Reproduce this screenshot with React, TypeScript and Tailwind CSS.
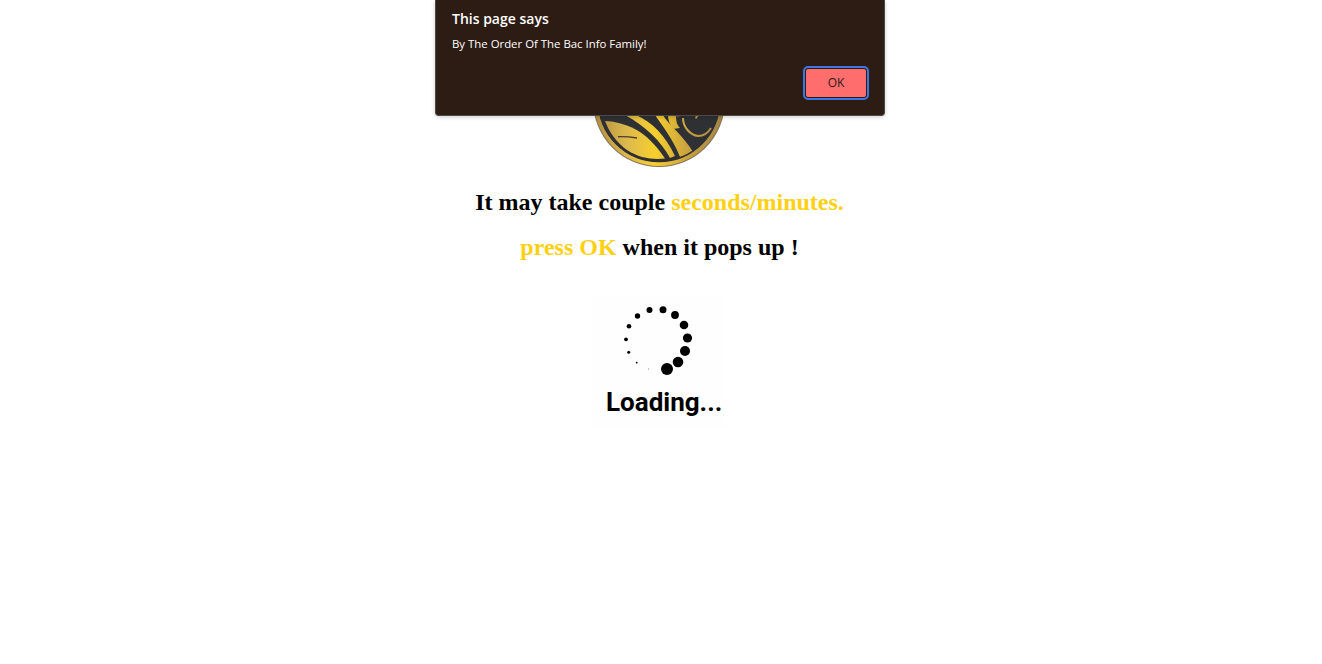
const loaderDots = [
  [74, 73, 6],
  [85, 66, 5.3],
  [92, 55, 5],
  [94.5, 42, 4.6],
  [91, 29, 4.3],
  [82, 19, 3.9],
  [70, 13.7, 3.5],
  [56.5, 14, 3],
  [44.5, 20, 2.7],
  [36, 30.3, 2.3],
  [33, 43.3, 1.9],
  [35.7, 56.3, 1.5],
  [43.7, 66.7, 0.9],
  [55.3, 73, 0.4],
];

function Emblem() {
  return (
    <svg width="132" height="132" viewBox="0 0 132 132" className="block">
      <defs>
        <linearGradient id="gold" gradientUnits="userSpaceOnUse" x1="0" x2="132" y1="0" y2="0">
          <stop offset="0" stopColor="#b08a3c" />
          <stop offset="0.25" stopColor="#dcb84e" />
          <stop offset="0.47" stopColor="#f6cf2e" />
          <stop offset="0.72" stopColor="#c9a13f" />
          <stop offset="1" stopColor="#a08244" />
        </linearGradient>
      </defs>
      <circle cx="66" cy="66" r="66" fill="#85765a" />
      <circle cx="66" cy="66" r="65" fill="url(#gold)" />
      <circle cx="66" cy="66" r="61" fill="#2f3033" />
      {/* wing feathers, only the lower part shows below the dialog */}
      <path
        d="M12 86 C22 86 36 90 47 97 C56 103 66 114 72 123.5 C60 125 46 123 34 115 C24 108 16 97 12 86 Z"
        fill="url(#gold)"
      />
      <path d="M25 101.7 C32 101.5 38 102 44 103" stroke="#4a3d2c" strokeWidth="1.4" fill="none" />
      <path d="M32 80 L43 80 C59 87 72 100 82 121 L77 123 C68 106 52 91 32 80 Z" fill="url(#gold)" />
      <path d="M62 80 L70 80 C74 88 90 100 100 117 L87 122 C80 104 70 92 62 80 Z" fill="url(#gold)" />
      <path d="M75 80 L83 80 C83 86 84 90 87 93 L80 94 C77 90 75 85 75 80 Z" fill="url(#gold)" />
      <path
        d="M90 83 C90 92 97 100 105 101 C111 101 115 98 118 93"
        stroke="url(#gold)"
        strokeWidth="2"
        fill="none"
      />
      <path d="M102 82 L106 80 L103 84 Z" fill="#d8b040" />
      <path d="M84 82 L88 80" stroke="#a8552c" strokeWidth="1" />
      <circle cx="66" cy="66" r="60.5" fill="none" stroke="#2f3033" strokeWidth="1.4" />
    </svg>
  );
}

function Loader() {
  return (
    <div className="w-[132px] h-[132px] bg-[#fdfefd] flex flex-col">
      <svg width="132" height="84" viewBox="0 0 132 84" className="block shrink-0">
        {loaderDots.map(([cx, cy, r], i) => (
          <circle key={i} cx={cx} cy={cy} r={r} fill="#000" />
        ))}
      </svg>
      <div className="pl-[13px] font-['Roboto',sans-serif] font-bold text-[26px] leading-[44px] text-black whitespace-nowrap">
        Loading...
      </div>
    </div>
  );
}

export default function App() {
  return (
    <div className="relative h-[664px] w-full overflow-hidden bg-white">
      <div className="flex flex-col items-center pt-[35px] pr-[4px]">
        <Emblem />
        <div className="mt-[13px] ml-[1px] text-center font-['Liberation_Serif',serif] font-bold text-[24px] leading-[45px] text-black">
          <p>
            It may take couple <span className="text-[#ffd013]">seconds/minutes.</span>
          </p>
          <p>
            <span className="text-[#ffd013]">press OK</span> when it pops up !
          </p>
        </div>
        <div className="mt-[26px]">
          <Loader />
        </div>
      </div>

      <div className="absolute top-0 left-[435px] w-[450px] h-[116px] bg-[#2d1c14] rounded-b-[4px] border border-t-0 border-[#4a4a4a] shadow-[0_1px_4px_rgba(0,0,0,0.2)] font-['Open_Sans',sans-serif] text-white flex flex-col px-[16px]">
        <div className="mt-[9px] text-[14px] leading-[20px] font-semibold">This page says</div>
        <div className="mt-[7px] text-[11.4px] leading-[16px]">By The Order Of The Bac Info Family!</div>
        <div className="flex justify-end mt-[16px] pr-[1px]">
          <button className="w-[62px] h-[30px] rounded-[3px] border border-[#2d1c14] outline-[2.5px] outline-[#3b78e7] bg-[#ff6d6d] text-[#2d1c14] text-[12px]">
            OK
          </button>
        </div>
      </div>
    </div>
  );
}
